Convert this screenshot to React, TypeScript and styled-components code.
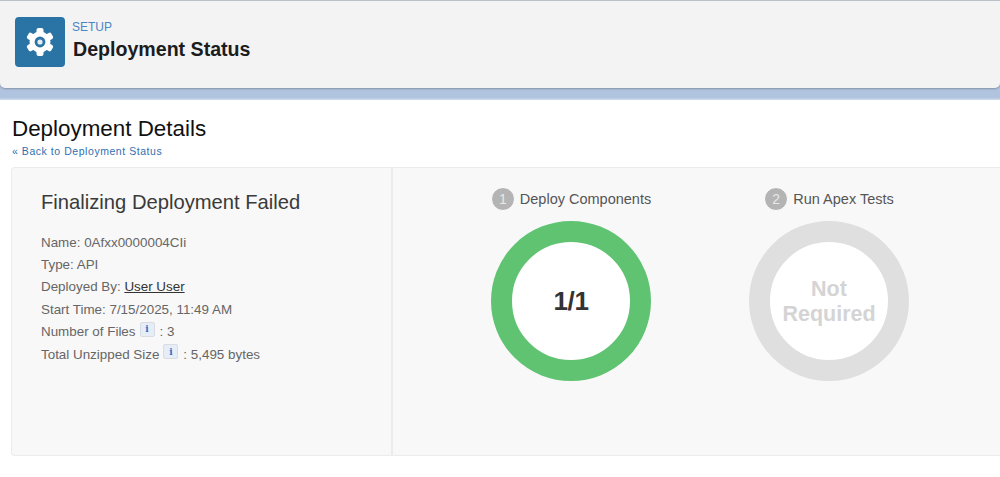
import React from 'react';
import styled, { createGlobalStyle } from 'styled-components';

const GlobalStyle = createGlobalStyle`
  html, body {
    margin: 0;
    padding: 0;
    background: #fff;
    overflow: hidden;
  }

  body {
    font-family: "Liberation Sans", Arial, sans-serif;
    color: #16191c;
  }
`;

const SCPage = styled.div`
  width: 1000px;
  height: 477px;
  overflow: hidden;
`;

const SCBand = styled.div`
  height: 100px;
  background: linear-gradient(#b0c4df 0, #b0c4df 98px, #c9d7ea 99px);
`;

const SCHeader = styled.header`
  box-sizing: border-box;
  height: 88px;
  padding: 16px 15px 0;
  display: flex;
  align-items: flex-start;
  gap: 8px;
  background: #f3f3f3;
  border-top: 1px solid #b9c0c8;
  border-radius: 0 0 5px 5px;
  box-shadow: 0 1px 2px rgba(0, 0, 0, 0.25);
`;

const SCHeaderIcon = styled.div`
  width: 50px;
  height: 50px;
  display: flex;
  align-items: center;
  justify-content: center;
  background: #2a73a5;
  border-radius: 4px;
`;

const SCHeaderText = styled.div`
  display: flex;
  flex-direction: column;
`;

const SCEyebrow = styled.span`
  margin: 3px 0 0 -1px;
  font-size: 12px;
  line-height: 15px;
  color: #4a86c5;
`;

const SCHeading = styled.h1`
  margin: 3px 0 0;
  font-size: 19.6px;
  line-height: 22px;
  font-weight: 700;
  color: #1b1c1e;
`;

const SCContent = styled.main`
  padding: 17px 0 0 11px;
`;

const SCTitle = styled.h2`
  margin: 0 0 0 1px;
  font-size: 22.4px;
  line-height: 24px;
  font-weight: 400;
  color: #111;
`;

const SCBackLink = styled.a`
  display: block;
  margin: 3px 0 0 1px;
  font-size: 10.5px;
  line-height: 14px;
  letter-spacing: 0.55px;
  color: #2f6fb0;
`;

const SCPanel = styled.section`
  box-sizing: border-box;
  height: 289px;
  margin-top: 9px;
  display: flex;
  background: #f8f8f8;
  border: 1px solid #ececec;
  border-right: 0;
  border-radius: 4px 0 0 4px;
`;

const SCSummary = styled.div`
  box-sizing: border-box;
  width: 381px;
  padding: 22px 0 0 29px;
  border-right: 2px solid #ececec;
`;

const SCStatus = styled.h3`
  margin: 0 0 17px;
  font-size: 20.2px;
  line-height: 24px;
  font-weight: 400;
  color: #3a3a3a;
`;

const SCDetail = styled.div`
  display: flex;
  align-items: center;
  height: 22.4px;
  font-size: 13.4px;
  color: #666;
  white-space: pre;
`;

const SCUser = styled.a`
  color: #333;
  text-decoration: underline;
`;

const SCInfo = styled.span`
  box-sizing: border-box;
  width: 15px;
  height: 15px;
  margin: -5px 5px 0 4px;
  display: inline-flex;
  align-items: center;
  justify-content: center;
  background: #e6edf6;
  border: 1px solid #d8dde3;
  border-radius: 2px;
  font-family: "DejaVu Serif", serif;
  font-size: 9px;
  font-weight: 700;
  color: #2f6fc4;
`;

const SCSteps = styled.div`
  flex: 1;
  padding: 19px 0 0 98px;
  display: flex;
  gap: 98px;
`;

const SCStep = styled.div`
  width: 160px;
`;

const SCStepLabel = styled.div`
  display: flex;
  align-items: center;
  justify-content: center;
  gap: 5px;
  height: 24px;
  font-size: 14.5px;
  color: #555;
  white-space: nowrap;
`;

const SCBadge = styled.span`
  box-sizing: border-box;
  flex: none;
  width: 24px;
  height: 24px;
  display: flex;
  align-items: center;
  justify-content: center;
  background: #b4b4b4;
  border: 1px solid #fff;
  border-radius: 50%;
  font-size: 14px;
  color: #e8e8e8;
`;

const SCRing = styled.div<{ $color: string }>`
  box-sizing: border-box;
  width: 160px;
  height: 160px;
  margin-top: 10px;
  display: flex;
  align-items: center;
  justify-content: center;
  background: #fff;
  border: 21px solid ${(props) => props.$color};
  border-radius: 50%;
`;

const SCCount = styled.span`
  font-size: 26px;
  font-weight: 700;
  letter-spacing: -0.4px;
  color: #333;
`;

const SCNotRequired = styled.span`
  margin-top: 1px;
  font-size: 21.5px;
  line-height: 25px;
  font-weight: 700;
  text-align: center;
  color: #d4d4d4;
`;

const GEAR_TEETH = [0, 60, 120, 180, 240, 300];

const GearIcon = () => (
  <svg width="30" height="30" viewBox="0 0 30 30" aria-hidden="true">
    {GEAR_TEETH.map((angle) => (
      <rect
        key={angle}
        x="11.5"
        y="1"
        width="7"
        height="8"
        rx="2"
        fill="#fff"
        transform={`rotate(${angle} 15 15)`}
      />
    ))}
    <circle cx="15" cy="15" r="10.5" fill="#fff" />
    <circle cx="15" cy="15" r="5.4" fill="#2a73a5" />
    <circle cx="15" cy="15" r="2.6" fill="#e4edf4" />
  </svg>
);

const App: React.FC = () => (
  <SCPage>
    <GlobalStyle />
    <SCBand>
      <SCHeader>
        <SCHeaderIcon>
          <GearIcon />
        </SCHeaderIcon>
        <SCHeaderText>
          <SCEyebrow>SETUP</SCEyebrow>
          <SCHeading>Deployment Status</SCHeading>
        </SCHeaderText>
      </SCHeader>
    </SCBand>
    <SCContent>
      <SCTitle>Deployment Details</SCTitle>
      <SCBackLink>« Back to Deployment Status</SCBackLink>
      <SCPanel>
        <SCSummary>
          <SCStatus>Finalizing Deployment Failed</SCStatus>
          <SCDetail>Name: 0Afxx0000004CIi</SCDetail>
          <SCDetail>Type: API</SCDetail>
          <SCDetail>
            Deployed By: <SCUser>User User</SCUser>
          </SCDetail>
          <SCDetail>Start Time: 7/15/2025, 11:49 AM</SCDetail>
          <SCDetail>
            Number of Files<SCInfo>i</SCInfo>: 3
          </SCDetail>
          <SCDetail>
            Total Unzipped Size<SCInfo>i</SCInfo>: 5,495 bytes
          </SCDetail>
        </SCSummary>
        <SCSteps>
          <SCStep>
            <SCStepLabel>
              <SCBadge>1</SCBadge>
              Deploy Components
            </SCStepLabel>
            <SCRing $color="#5fc372">
              <SCCount>1/1</SCCount>
            </SCRing>
          </SCStep>
          <SCStep>
            <SCStepLabel>
              <SCBadge>2</SCBadge>
              Run Apex Tests
            </SCStepLabel>
            <SCRing $color="#dfdfdf">
              <SCNotRequired>
                Not
                <br />
                Required
              </SCNotRequired>
            </SCRing>
          </SCStep>
        </SCSteps>
      </SCPanel>
    </SCContent>
  </SCPage>
);

export default App;
